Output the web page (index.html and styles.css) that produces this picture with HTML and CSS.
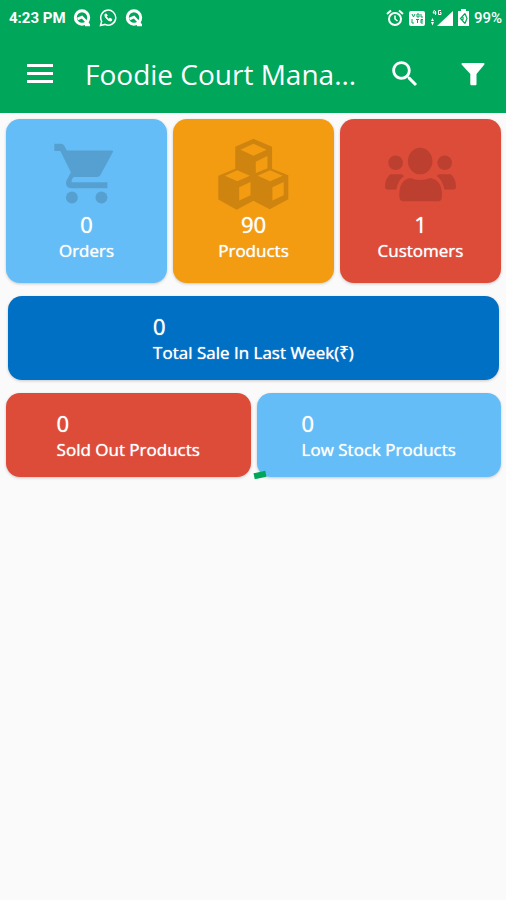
FILE: index.html
```html
<!DOCTYPE html>
<html lang="en">
<head>
    <meta charset="UTF-8">
    <meta name="viewport" content="width=device-width, initial-scale=1.0">
    <title>Foodie Court Management</title>
    <link rel="stylesheet" href="styles.css">
</head>
<body>

    <header>
        <!-- Status bar -->
        <div class="status-bar">
            <span class="clock">4:23 PM</span>
            <div class="status-icons">
                <svg width="18" height="18" viewBox="0 0 18 18" fill="none" stroke="#fff" stroke-width="3"><circle cx="9" cy="8.500" r="6.700"/><path d="M4.500 10l4.500-2 6.500 7M12 16h5" stroke-width="2.500"/></svg>
                <svg width="18" height="18" viewBox="0 0 18 18" fill="none" stroke="#fff" stroke-width="1.500"><path d="M1.500 16.500l1.200-4.200A7.500 7.500 0 1 1 6 15.400z"/><path d="M6 5.200c-.8 2.800 3 7 6.200 6.800l.6-1.800-2-1-1 1c-1.200-.6-2-1.500-2.400-2.600l.8-.9-.8-1.700z" fill="#fff" stroke-width="1"/></svg>
                <svg width="18" height="18" viewBox="0 0 18 18" fill="none" stroke="#fff" stroke-width="3"><circle cx="9" cy="8.500" r="6.700"/><path d="M4.500 10l4.500-2 6.500 7M12 16h5" stroke-width="2.500"/></svg>
            </div>
            <div class="status-right">
                <svg width="18" height="18" viewBox="0 0 18 18" fill="none" stroke="#fff" stroke-width="2"><circle cx="9" cy="10" r="6"/><path d="M1 5l4-3.500M17 5l-4-3.500"/><path d="M9 6.500V10l2.500 2" stroke-width="1.500"/></svg>
                <svg width="16" height="16" viewBox="0 0 16 16"><rect width="16" height="15" y="1" rx="2" fill="#fff"/><path d="M3 4l1.500 3L6 4M8 4h2v3H8zM12 4v3h2M3 9v4h2M7 9.500h3M8.500 9.500V13M14 9.500h-2V13h2M12 11h2" fill="none" stroke="#00a65a"/></svg>
                <svg width="23" height="18" viewBox="0 0 23 18"><path d="M23 2v15H7zM1 12h3l-1.500-3zM1 13h3l-1.500 3.500z" fill="#fff"/><path d="M4.500 1L3 4h3.500M5.500 2v4M11 1.500H8.500v4H11v-2H10" fill="none" stroke="#fff"/></svg>
                <svg width="11" height="17" viewBox="0 0 11 17"><path d="M3 0h5v2h3v15H0V2h3z" fill="#fff"/><path d="M7 4.500L2.500 9.500 7 14.500M7 4.500l2 5-2 5M5 8v3" fill="none" stroke="#00a65a" stroke-width="1.200"/></svg>
                <span class="battery">99%</span>
            </div>
        </div>

        <!-- Toolbar -->
        <div class="toolbar">
            <button class="menu-btn" aria-label="Menu">
                <svg width="28" height="20" viewBox="0 0 28 20" fill="#fff"><path d="M1 0h26v3H1zM1 8h26v3H1zM1 16h26v3H1z"/></svg>
            </button>
            <h1>Foodie Court Mana...</h1>
            <button class="search-btn" aria-label="Search">
                <svg width="34" height="34" viewBox="0 0 24 24" fill="#fff"><path d="M15.500 14h-.79l-.28-.27C15.410 12.590 16 11.110 16 9.500 16 5.910 13.090 3 9.500 3S3 5.910 3 9.500 5.910 16 9.500 16c1.610 0 3.090-.59 4.230-1.570l.27.28v.79l5 4.990L20.490 19l-4.990-5zm-6 0C7.010 14 5 11.990 5 9.500S7.010 5 9.500 5 14 7.010 14 9.500 11.990 14 9.500 14z"/></svg>
            </button>
            <button aria-label="Filter">
                <svg width="34" height="34" viewBox="0 0 34 34" fill="#fff"><path d="M6.500 6h21c1 0 1.300 1 .7 1.700L20.500 17v10c0 .8-.5 1.300-1.300 1.300h-3.600c-.8 0-1.300-.5-1.300-1.300V17L5.800 7.700C5.200 7 5.500 6 6.500 6z"/></svg>
            </button>
        </div>
    </header>

    <main>
        <div class="row three">
            <section class="card tile blue">
                <svg class="icon" width="71" height="72" viewBox="153 79 214 216"><path d="M163 96h21q6 0 9 6l8 14h135q6 0 3 6l-37 68q-4 6-10 6h-68q-4 0-6 4l-3 8q-1 4 3 4h105v18H216q-18 0-18-16 0-5 3-10l12-22-32-64h-18z"/><circle cx="216" cy="258" r="18"/><circle cx="305" cy="258" r="18"/></svg>
                <span class="count">0</span>
                <span class="label">Orders</span>
            </section>
            <section class="card tile orange">
                <svg class="icon" width="71" height="72" viewBox="150 78 214 216"><path fill-rule="evenodd" d="M257 80l56 24v66l49 20v72l-56 30-49-25-51 27-55-31v-72l51-21v-66zM257 95l-39 18 39 18 39-18zM299 132l-35 17v34l35-14zM208 175l-37 16 37 17 38-17zM248 210l-34 16v40l34-16zM307 175l-37 16 37 17 38-17zM348 210l-34 16v40l34-16z"/></svg>
                <span class="count">90</span>
                <span class="label">Products</span>
            </section>
            <section class="card tile red">
                <svg class="icon" width="71" height="72" viewBox="147 78 214 216"><ellipse cx="253" cy="147" rx="37" ry="40"/><circle cx="179" cy="152" r="22"/><circle cx="327" cy="152" r="22"/><path d="M223 198q30 12 60 0 36 6 36 52 0 18-10 18H201q-11 0-11-18 0-46 33-52zM163 187h34l8 5q-18 10-24 41h-27q-7 0-7-10 1-25 16-36zM345 187h-35l-8 5q18 10 24 41h28q7 0 7-10-1-25-16-36z"/></svg>
                <span class="count">1</span>
                <span class="label">Customers</span>
            </section>
        </div>

        <section class="card wide dark-blue">
            <div class="info">
                <span class="count">0</span>
                <span class="label">Total Sale In Last Week(₹)</span>
            </div>
        </section>

        <div class="row two">
            <section class="card wide red">
                <div class="info">
                    <span class="count">0</span>
                    <span class="label">Sold Out Products</span>
                </div>
            </section>
            <section class="card wide blue">
                <div class="info">
                    <span class="count">0</span>
                    <span class="label">Low Stock Products</span>
                </div>
            </section>
            <!-- Loading spinner, just starting its arc -->
            <span class="spinner"></span>
        </div>
    </main>

</body>
</html>
```
FILE: styles.css
```css
* {
    margin: 0;
    padding: 0;
    box-sizing: border-box;
}

body {
    font-family: 'Open Sans', 'Noto Sans', sans-serif;
    background-color: #fafafa;
    color: #fff;
    min-height: 100vh;
}

header {
    background-color: #00a65a; /* Green */
}

/* Status bar */
.status-bar {
    display: flex;
    align-items: center;
    height: 35px;
    padding: 0 4px 0 9px;
    font-family: Roboto, sans-serif;
    font-size: 15px;
}

.clock {
    font-weight: 700;
}

.battery {
    font-weight: 500;
}

.status-icons {
    display: flex;
    gap: 8px;
    margin-left: 7px;
}

.status-right {
    display: flex;
    align-items: center;
    gap: 5px;
    margin-left: auto;
}

/* Toolbar */
.toolbar {
    display: flex;
    align-items: center;
    height: 78px;
    padding: 0 16px 0 26px;
}

.toolbar button {
    display: flex;
    background: none;
    border: none;
    cursor: pointer;
    margin-left: 34px;
}

.toolbar .menu-btn {
    margin-left: 0;
}

.toolbar .search-btn {
    margin-left: 16px;
}

h1 {
    flex: 1;
    margin-left: 31px;
    font-size: 28px;
    font-weight: 400;
    line-height: 40px;
    white-space: nowrap;
}

/* Cards */
main {
    padding: 6px 5px 6px 6px;
}

.row {
    display: grid;
    gap: 6px;
    position: relative;
}

.three {
    grid-template-columns: repeat(3, 1fr);
}

.two {
    grid-template-columns: repeat(2, 1fr);
}

.card {
    display: flex;
    border-radius: 14px;
    box-shadow: 0 1px 3px rgba(0, 0, 0, 0.2);
}

.tile {
    flex-direction: column;
    align-items: center;
    padding: 19px 0;
}

.wide {
    justify-content: center;
    padding: 16px 0 14px;
}

main > .wide {
    margin: 13px 2px;
}

.info {
    display: flex;
    flex-direction: column;
}

.icon {
    fill: rgba(0, 0, 0, 0.15);
}

.count,
.label {
    text-shadow: 0 0 1px #fff; /* Slightly heavier strokes */
    white-space: nowrap;
}

.count {
    font-size: 22px;
    line-height: 28px;
}

.label {
    font-size: 17px;
    line-height: 26px;
}

.blue {
    background-color: #64bdf6;
}

.orange {
    background-color: #f39c12;
}

.red {
    background-color: #dd4b39;
}

.dark-blue {
    background-color: #0070c5;
}

.spinner {
    position: absolute;
    left: 50%;
    bottom: -1px;
    width: 12px;
    height: 6px;
    background-color: #00a65a;
    transform: rotate(-12deg);
}
```
